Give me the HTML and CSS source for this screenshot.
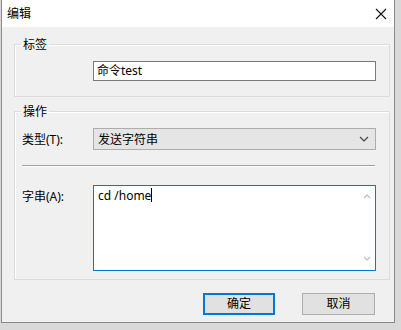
FILE: index.html
```html
<!DOCTYPE html>
<html lang="zh-CN">
<head>
    <meta charset="UTF-8">
    <title>编辑</title>
    <link rel="stylesheet" href="styles.css">
</head>
<body>
    <div class="window">
        <div class="titlebar">
            <span class="title">编辑</span>
            <svg class="close" width="12" height="12" viewBox="0 0 12 12">
                <path d="M1 1 L11 11 M11 1 L1 11" stroke="#111" stroke-width="1.1" fill="none"/>
            </svg>
        </div>
        <div class="client">
            <fieldset class="group">
                <legend>标签</legend>
                <div class="row first">
                    <span class="label"></span>
                    <div class="textbox">命令test</div>
                </div>
            </fieldset>
            <fieldset class="group action">
                <legend>操作</legend>
                <div class="row first">
                    <span class="label">类型(T):</span>
                    <div class="combo">
                        <span>发送字符串</span>
                        <svg width="10" height="6" viewBox="0 0 10 6">
                            <path d="M1 1 L5 5 L9 1" stroke="#444" stroke-width="1.2" fill="none"/>
                        </svg>
                    </div>
                </div>
                <div class="separator"></div>
                <div class="row top">
                    <span class="label">字串(A):</span>
                    <div class="memo">
                        <div class="memo-text">cd /home<span class="caret"></span></div>
                        <div class="scroll">
                            <svg width="8" height="5" viewBox="0 0 8 5"><path d="M1 4 L4 1 L7 4" stroke="#bbb" stroke-width="1.1" fill="none"/></svg>
                            <svg width="8" height="5" viewBox="0 0 8 5"><path d="M1 1 L4 4 L7 1" stroke="#bbb" stroke-width="1.1" fill="none"/></svg>
                        </div>
                    </div>
                </div>
            </fieldset>
            <div class="buttons">
                <button class="btn default">确定</button>
                <button class="btn">取消</button>
            </div>
        </div>
    </div>
</body>
</html>
```

FILE: styles.css
```css
body {
    margin: 0;
    width: 401px;
    height: 330px;
    background-color: #d9d9d9;
    font-family: "Noto Sans", "Noto Sans CJK SC", sans-serif;
    font-size: 12px;
    color: #000;
    overflow: hidden;
}
.window {
    width: 392px;
    height: 322px;
    margin-left: 1px;
    border: 1px solid #8a8a8a;
    border-top: none;
    background-color: #f0f0f0;
}
.titlebar {
    height: 27px;
    background-color: #fff;
    display: flex;
    align-items: center;
    justify-content: space-between;
    padding: 0 6px 0 5px;
}
.title {
    line-height: 17px;
}
.close {
    margin-right: 1px;
}
.client {
    padding: 9px 0 0 12px;
}
.group {
    margin: 0;
    padding: 0 0 15px 0;
    border: 1px solid #dcdcdc;
    box-shadow: inset 1px 1px 0 #fff;
    box-sizing: border-box;
    width: 376px;
}
.group legend {
    margin-left: 6px;
    padding: 0 2px;
    line-height: 17px;
}
.group.action {
    margin-top: 6px;
    padding-bottom: 8px;
}
.row {
    display: flex;
    align-items: center;
}
.row.first {
    margin-top: 8px;
}
.row.top {
    align-items: flex-start;
}
.label {
    width: 78px;
    padding-left: 7px;
    box-sizing: border-box;
    flex: none;
    line-height: 17px;
}
.row.top .label {
    margin-top: 3px;
}
.textbox {
    width: 283px;
    height: 20px;
    box-sizing: border-box;
    border: 1px solid #7a7a7a;
    background-color: #fff;
    padding-left: 3px;
    line-height: 18px;
}
.combo {
    width: 283px;
    height: 22px;
    box-sizing: border-box;
    border: 1px solid #adadad;
    background-color: #e5e5e5;
    display: flex;
    align-items: center;
    justify-content: space-between;
    padding: 0 6px 0 4px;
}
.separator {
    margin: 15px 14px 19px 7px;
    height: 1px;
    background-color: #a0a0a0;
    box-shadow: 0 1px 0 #fff;
}
.memo {
    width: 283px;
    height: 86px;
    box-sizing: border-box;
    border: 1px solid #0078d7;
    background-color: #fff;
    display: flex;
}
.memo-text {
    flex: 1;
    padding: 1px 4px;
    line-height: 17px;
}
.caret {
    display: inline-block;
    width: 1px;
    height: 14px;
    background-color: #000;
    vertical-align: -2px;
}
.scroll {
    width: 17px;
    display: flex;
    flex-direction: column;
    align-items: center;
    justify-content: space-between;
    padding: 8px 0 9px;
}
.buttons {
    display: flex;
    justify-content: flex-end;
    gap: 27px;
    margin-top: 13px;
    padding-right: 19px;
}
.btn {
    width: 73px;
    height: 22px;
    font-family: "Noto Sans", "Noto Sans CJK SC", sans-serif;
    font-size: 12px;
    background-color: #e1e1e1;
    border: 1px solid #adadad;
    padding: 0;
    line-height: 18px;
}
.btn.default {
    width: 72px;
    border: 2px solid #0078d7;
}
```
